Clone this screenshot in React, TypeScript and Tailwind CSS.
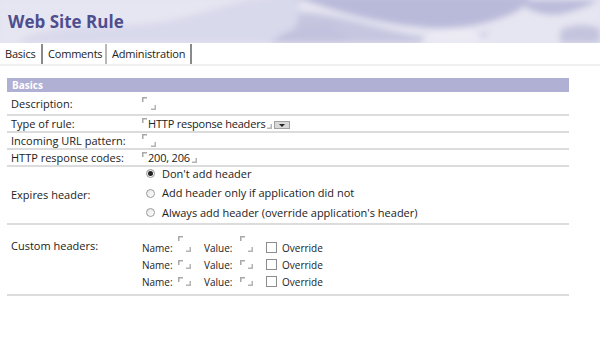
import React from "react";

const font = { fontFamily: '"Open Sans", "Noto Sans", sans-serif' };

function MarkTL() {
  return (
    <svg width="5" height="5" viewBox="0 0 5 5" className="shrink-0">
      <path d="M0 0H5V1.5H1.5V5H0Z" fill="#a8a8a8" />
    </svg>
  );
}

function MarkBR() {
  return (
    <svg width="5" height="5" viewBox="0 0 5 5" className="shrink-0">
      <path d="M5 0V5H0V3.5H3.5V0Z" fill="#b4b4b4" />
    </svg>
  );
}

function Field({ value, tall }: { value?: string; tall?: boolean }) {
  return (
    <span className={`inline-flex ${tall ? "h-[13px]" : "h-[11px]"} items-stretch`}>
      <span className="self-start">
        <MarkTL />
      </span>
      {value ? (
        <span className="ml-[1px] self-center text-[11px] leading-[12px] tracking-[-0.2px] text-[#222]">{value}</span>
      ) : null}
      <span className={`self-end ${value ? "ml-[2px]" : "ml-[4px]"}`}>
        <MarkBR />
      </span>
    </span>
  );
}

function Row({ label, children, className = "" }: { label: string; children?: React.ReactNode; className?: string }) {
  return (
    <div className={`flex items-center border-b-2 border-[#dcdcdc] ${className}`}>
      <div className="w-[135px] shrink-0 pl-[4px] text-[11px] leading-[14px] text-[#222]">{label}</div>
      <div className="flex flex-1 items-center leading-none">{children}</div>
    </div>
  );
}

function Radio({ checked, label }: { checked?: boolean; label: string }) {
  return (
    <div className="flex h-[19.5px] items-center">
      <span className="flex h-[9px] w-[9px] items-center justify-center rounded-full border border-[#9a9a9a] bg-gradient-to-br from-[#e6e6e6] to-white">
        {checked ? <span className="h-[5px] w-[5px] rounded-full bg-[#222]" /> : null}
      </span>
      <span className="ml-[7px] text-[11px] leading-[14px] text-[#222]">{label}</span>
    </div>
  );
}

function Mini({ first }: { first?: boolean }) {
  return (
    <span className={`inline-flex items-stretch ${first ? "h-[16px] -mt-[8px]" : "h-[9px] -mt-[1px]"}`}>
      <span className="self-start">
        <MarkTL />
      </span>
      <span className="ml-[3px] self-end">
        <MarkBR />
      </span>
    </span>
  );
}

function HeaderLine({ first }: { first?: boolean }) {
  return (
    <div className="flex h-[17px] items-center text-[10px] leading-[12px] text-[#222]">
      <span className="w-[36px] shrink-0">Name:</span>
      <Mini first={first} />
      <span className="ml-[13px] w-[36px] shrink-0">Value:</span>
      <Mini first={first} />
      <span className="ml-[13px] h-[11px] w-[11px] shrink-0 border border-[#8c8c8c] bg-white" />
      <span className="ml-[5px]">Override</span>
    </div>
  );
}

export default function App() {
  return (
    <div className="h-[343px] w-[600px] overflow-hidden bg-white" style={font}>
      <div className="relative h-[43px] overflow-hidden bg-[#e4e4f1]">
        <svg className="absolute inset-0" width="600" height="43" viewBox="0 0 600 43">
          <defs>
            <filter id="blur" x="-20%" y="-50%" width="140%" height="200%">
              <feGaussianBlur stdDeviation="3" />
            </filter>
          </defs>
          <g filter="url(#blur)">
            <path d="M0 0H600V43H0Z" fill="#e6e6f2" />
            <path d="M20 40C60 20 120 30 170 20C220 10 240 -5 300 -5V43H20Z" fill="#d6d6ea" opacity="0.8" />
            <path d="M290 -5C330 10 380 25 430 28C470 30 500 20 520 10L530 -5Z" fill="#b9b9da" />
            <path d="M300 12C340 14 380 30 420 36C460 40 480 36 490 30L480 43H290Z" fill="#c6c6e0" />
            <path d="M510 0C530 10 545 20 570 12C585 8 600 0 600 0Z" fill="#bcbcdb" />
            <path d="M270 43C285 30 300 25 330 22L350 43Z" fill="#c2c2de" />
            <path d="M420 43C430 30 450 28 470 30L490 43Z" fill="#ecebf4" />
            <path d="M560 30C575 22 590 25 600 28V43H560Z" fill="#c4c4de" />
          </g>
        </svg>
        <div className="relative pl-[8px] pt-[12px] text-[17px] font-bold leading-[20px] text-[#4e4e8e]">Web Site Rule</div>
      </div>

      <div className="flex h-[21px] items-stretch pt-[1px] text-[11px] text-[#222]">
        <div className="flex w-[41px] items-center pl-[5px] tracking-[-0.2px]">Basics</div>
        <div className="flex w-[64px] items-center border-l-2 border-[#8a8a8a] pl-[5px] tracking-[-0.2px]">Comments</div>
        <div className="flex w-[85px] items-center border-l-2 border-[#b8b8b8] pl-[5px] tracking-[-0.2px]">Administration</div>
        <div className="border-l-2 border-[#8a8a8a]" />
      </div>
      <div className="h-[2px] bg-[#f0f0f0]" />

      <div className="ml-[7px] mt-[12px] w-[562px]">
        <div className="flex h-[14px] items-center bg-[#b0b0d4] pl-[5px] text-[10px] font-bold text-white">Basics</div>
        <Row label="Description:" className="h-[24px] pt-[1px]">
          <Field tall />
        </Row>
        <Row label="Type of rule:" className="h-[17px]">
          <span className="inline-flex items-center">
            <Field value="HTTP response headers" />
            <span className="ml-[2px] mt-[3px] flex h-[8px] w-[16px] items-center justify-center border border-[#a0a0a0] bg-[#d8d8d8]">
              <svg width="6" height="3" viewBox="0 0 6 3">
                <path d="M0 0H6L3 3Z" fill="#222" />
              </svg>
            </span>
          </span>
        </Row>
        <Row label="Incoming URL pattern:" className="h-[17px]">
          <Field tall />
        </Row>
        <Row label="HTTP response codes:" className="h-[17px]">
          <Field value="200, 206" />
        </Row>
        <Row label="Expires header:" className="h-[58px]">
          <div className="-mt-[4px] pl-[4px]">
            <Radio checked label="Don't add header" />
            <Radio label="Add header only if application did not" />
            <Radio label="Always add header (override application's header)" />
          </div>
        </Row>
        <div className="flex h-[71px] border-b-2 border-[#dcdcdc]">
          <div className="w-[135px] shrink-0 pl-[4px] pt-[14px] text-[11px] leading-[14px] text-[#222]">Custom headers:</div>
          <div className="flex-1 pt-[14px]">
            <HeaderLine first />
            <HeaderLine />
            <HeaderLine />
          </div>
        </div>
      </div>
    </div>
  );
}
